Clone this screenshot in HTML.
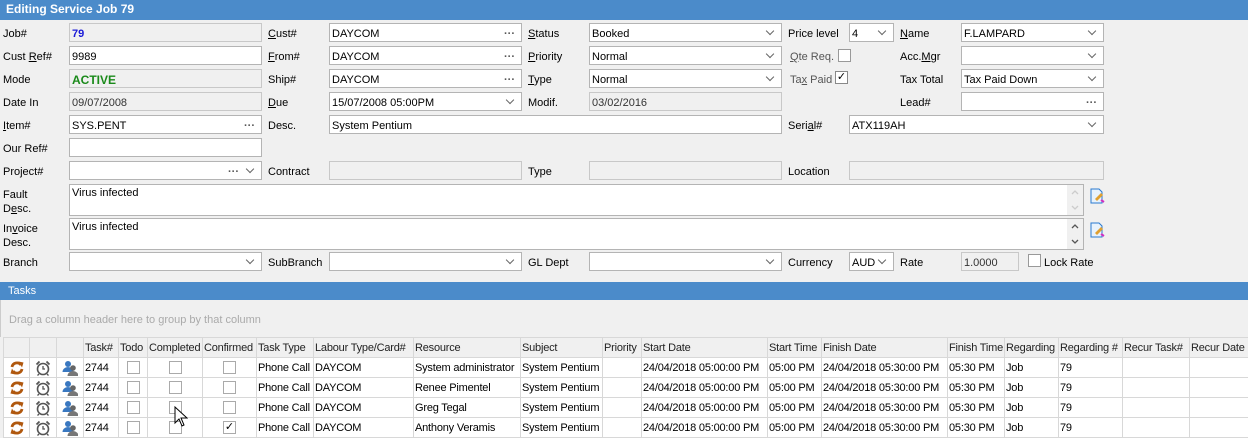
<!DOCTYPE html>
<html><head><meta charset="utf-8"><style>
*{box-sizing:border-box;margin:0;padding:0}
body{width:1248px;height:434px;overflow:hidden;background:#f0f0f0;font-family:"Liberation Sans",sans-serif;font-size:11px;color:#000;position:relative}
.t{position:absolute;left:0;top:0;width:1248px;height:20px;background:#4b8bca;color:#fff;font-weight:bold;font-size:12px;line-height:19px;padding-left:6px}
.l{position:absolute;line-height:14px;white-space:nowrap;margin-top:1px}
.i{position:absolute;height:19px;border:1px solid #b4b4b4;background:#fff;line-height:18px;padding-top:1px;padding-left:2px;white-space:nowrap;overflow:hidden}
.d{background:#f0f0f0;border-color:#c8c8c8;color:#333}
.s::after{content:"";position:absolute;right:8px;top:4px;width:5px;height:5px;border-right:1.3px solid #666;border-bottom:1.3px solid #666;transform:rotate(45deg)}
.e::before{content:"···";position:absolute;right:6px;top:1px;color:#555;font-weight:bold}
.se::before{content:"···";position:absolute;right:22px;top:1px;color:#555;font-weight:bold}
.cb{position:absolute;width:13px;height:13px;border:1px solid #999;background:#fff}
.ta{position:absolute;height:32px;border:1px solid #b4b4b4;background:#fff;padding:2px 2px}
.sc{position:absolute;right:0;top:0;width:16px;height:30px;background:#f0f0f0}
u{text-decoration:underline}
.tb{position:absolute;left:0;top:282px;width:1248px;height:18px;background:#4b8bca;color:#fff;line-height:18px;padding-left:8px}
.dr{position:absolute;left:0;top:300px;width:1248px;height:37px;background:#f0f0f0;color:#aaa;line-height:40px;padding-left:8px;border-left:1px solid #ccc}
table{position:absolute;left:3px;top:337px;width:1245px;border-collapse:collapse;table-layout:fixed;background:#fff;letter-spacing:-0.2px}
td{border:1px solid #d8d8d8;height:20px;padding:0 1px;white-space:nowrap;overflow:hidden;vertical-align:middle}
tr.h td{background:#f0f0f0;color:#222;height:20px}
.c{text-align:center;padding:0}
.c svg{display:block;margin:0 auto}
.gcb{display:inline-block;width:13px;height:13px;border:1px solid #aaa;background:#fff;vertical-align:middle;position:relative;letter-spacing:0}
</style></head><body>
<svg width="0" height="0" style="position:absolute">
<defs>
<g id="rot"><path d="M3 7a5 5 0 0 1 9-2" fill="none" stroke="#b0580e" stroke-width="2.8"/><path d="M9.5 1.5l5 1-1.5 5z" fill="#b0580e"/><path d="M13 9a5 5 0 0 1-9 2" fill="none" stroke="#b0580e" stroke-width="2.8"/><path d="M6.5 14.5l-5-1 1.5-5z" fill="#b0580e"/></g>
<g id="clk"><circle cx="8" cy="9" r="5.5" fill="#fff" stroke="#555" stroke-width="1.6"/><path d="M8 6v3h2" fill="none" stroke="#555" stroke-width="1.3"/><path d="M1.5 4.5l3-3M14.5 4.5l-3-3" stroke="#555" stroke-width="1.8"/><path d="M4 14l-1.5 1.5M12 14l1.5 1.5" stroke="#555" stroke-width="1.3"/></g>
<g id="ppl"><circle cx="6" cy="4" r="3" fill="#3a78c0"/><path d="M0.5 12a5.5 5 0 0 1 11 0z" fill="#3a78c0"/><circle cx="11" cy="8" r="2.8" fill="#666"/><path d="M5.5 16a5.5 5 0 0 1 11 0z" fill="#777"/></g>
</defs></svg>
<div class="t">Editing Service Job 79</div>

<div class="l" style="left:3px;top:26px">Job#</div>
<div class="i d" style="left:69px;top:23px;width:193px;color:#1b1bd8;font-weight:bold">79</div>
<div class="l" style="left:268px;top:26px"><u>C</u>ust#</div>
<div class="i e" style="left:329px;top:23px;width:193px">DAYCOM</div>
<div class="l" style="left:528px;top:26px"><u>S</u>tatus</div>
<div class="i s" style="left:589px;top:23px;width:193px">Booked</div>
<div class="l" style="left:788px;top:26px">Price level</div>
<div class="i s" style="left:849px;top:23px;width:45px">4</div>
<div class="l" style="left:900px;top:26px"><u>N</u>ame</div>
<div class="i s" style="left:961px;top:23px;width:143px">F.LAMPARD</div>

<div class="l" style="left:3px;top:49px">Cust <u>R</u>ef#</div>
<div class="i" style="left:69px;top:46px;width:193px">9989</div>
<div class="l" style="left:268px;top:49px"><u>F</u>rom#</div>
<div class="i e" style="left:329px;top:46px;width:193px">DAYCOM</div>
<div class="l" style="left:528px;top:49px"><u>P</u>riority</div>
<div class="i s" style="left:589px;top:46px;width:193px">Normal</div>
<div class="l" style="left:790px;top:49px;color:#555"><u>Q</u>te Req.</div>
<div class="cb" style="left:838px;top:49px"></div>
<div class="l" style="left:900px;top:49px">Acc.<u>M</u>gr</div>
<div class="i s" style="left:961px;top:46px;width:143px"></div>

<div class="l" style="left:3px;top:72px">Mode</div>
<div class="i d" style="left:69px;top:69px;width:193px;color:#1a8a1a;font-weight:bold;font-size:12px">ACTIVE</div>
<div class="l" style="left:268px;top:72px">Ship#</div>
<div class="i e" style="left:329px;top:69px;width:193px">DAYCOM</div>
<div class="l" style="left:528px;top:72px"><u>T</u>ype</div>
<div class="i s" style="left:589px;top:69px;width:193px">Normal</div>
<div class="l" style="left:790px;top:72px;color:#555">Ta<u>x</u> Paid</div>
<div class="cb" style="left:835px;top:71px;border-color:#888;font-size:11px;line-height:11px;text-align:center">✓</div>
<div class="l" style="left:900px;top:72px">Tax Total</div>
<div class="i s" style="left:961px;top:69px;width:143px">Tax Paid Down</div>

<div class="l" style="left:3px;top:95px">Date In</div>
<div class="i d" style="left:69px;top:92px;width:193px">09/07/2008</div>
<div class="l" style="left:268px;top:95px"><u>D</u>ue</div>
<div class="i s" style="left:329px;top:92px;width:193px">15/07/2008 05:00PM</div>
<div class="l" style="left:528px;top:95px">Modif.</div>
<div class="i d" style="left:589px;top:92px;width:193px">03/02/2016</div>
<div class="l" style="left:900px;top:95px">Lead#</div>
<div class="i e" style="left:961px;top:92px;width:143px"></div>

<div class="l" style="left:3px;top:118px"><u>I</u>tem#</div>
<div class="i e" style="left:69px;top:115px;width:193px">SYS.PENT</div>
<div class="l" style="left:268px;top:118px">Desc.</div>
<div class="i" style="left:329px;top:115px;width:453px">System Pentium</div>
<div class="l" style="left:788px;top:118px">Seri<u>a</u>l#</div>
<div class="i s" style="left:849px;top:115px;width:255px">ATX119AH</div>

<div class="l" style="left:3px;top:141px">Our Ref#</div>
<div class="i" style="left:69px;top:138px;width:193px"></div>

<div class="l" style="left:3px;top:164px">Project#</div>
<div class="i s se" style="left:69px;top:161px;width:193px"></div>
<div class="l" style="left:268px;top:164px">Contract</div>
<div class="i d" style="left:329px;top:161px;width:193px"></div>
<div class="l" style="left:528px;top:164px">Type</div>
<div class="i d" style="left:589px;top:161px;width:193px"></div>
<div class="l" style="left:788px;top:164px">Location</div>
<div class="i d" style="left:849px;top:161px;width:255px"></div>

<div class="l" style="left:3px;top:187px">Fault<br>D<u>e</u>sc.</div>
<div class="ta" style="left:69px;top:184px;width:1015px">Virus infected<div class="sc"><svg width="16" height="30"><path d="M5 9l3-3 3 3M5 21l3 3 3-3" fill="none" stroke="#ccc" stroke-width="1.3"/></svg></div></div>
<div class="l" style="left:3px;top:221px">In<u>v</u>oice<br>Desc.</div>
<div class="ta" style="left:69px;top:218px;width:1015px">Virus infected<div class="sc"><svg width="16" height="30"><path d="M5 9l3-3 3 3M5 21l3 3 3-3" fill="none" stroke="#555" stroke-width="1.3"/></svg></div></div>
<svg style="position:absolute;left:1089px;top:188px" width="16" height="16"><path d="M2 1h8l3 3v11H2z" fill="#e8f2fc" stroke="#2a7ad0"/><path d="M6 11l6-6 2 2-6 6z" fill="#e0a030"/><path d="M12 12l3 2" stroke="#d030c0" stroke-width="2"/></svg>
<svg style="position:absolute;left:1089px;top:222px" width="16" height="16"><path d="M2 1h8l3 3v11H2z" fill="#e8f2fc" stroke="#2a7ad0"/><path d="M6 11l6-6 2 2-6 6z" fill="#e0a030"/><path d="M12 12l3 2" stroke="#d030c0" stroke-width="2"/></svg>

<div class="l" style="left:3px;top:255px">Branch</div>
<div class="i s" style="left:69px;top:252px;width:193px"></div>
<div class="l" style="left:268px;top:255px">SubBranch</div>
<div class="i s" style="left:329px;top:252px;width:193px"></div>
<div class="l" style="left:528px;top:255px">GL Dept</div>
<div class="i s" style="left:589px;top:252px;width:193px"></div>
<div class="l" style="left:788px;top:255px">Currency</div>
<div class="i s" style="left:849px;top:252px;width:45px">AUD</div>
<div class="l" style="left:900px;top:255px">Rate</div>
<div class="i d" style="left:961px;top:252px;width:58px">1.0000</div>
<div class="cb" style="left:1028px;top:254px;border-color:#999"></div>
<div class="l" style="left:1044px;top:255px">Lock Rate</div>

<div class="tb">Tasks</div>
<div class="dr">Drag a column header here to group by that column</div>
<table>
<colgroup><col style="width:26px"><col style="width:27px"><col style="width:27px"><col style="width:35px"><col style="width:29px"><col style="width:55px"><col style="width:54px"><col style="width:57px"><col style="width:100px"><col style="width:107px"><col style="width:82px"><col style="width:39px"><col style="width:126px"><col style="width:54px"><col style="width:126px"><col style="width:57px"><col style="width:54px"><col style="width:64px"><col style="width:67px"><col style="width:59px"></colgroup>
<tr class="h"><td></td><td></td><td></td><td>Task#</td><td>Todo</td><td>Completed</td><td>Confirmed</td><td>Task Type</td><td>Labour Type/Card#</td><td>Resource</td><td>Subject</td><td>Priority</td><td>Start Date</td><td>Start Time</td><td>Finish Date</td><td>Finish Time</td><td>Regarding</td><td>Regarding #</td><td>Recur Task#</td><td>Recur Date</td></tr>
<tr><td class="c"><svg width="16" height="16"><use href="#rot"/></svg></td><td class="c"><svg width="16" height="16"><use href="#clk"/></svg></td><td class="c"><svg width="16" height="16"><use href="#ppl"/></svg></td><td>2744</td><td class="c"><span class="gcb"></span></td><td class="c"><span class="gcb"></span></td><td class="c"><span class="gcb"></span></td><td>Phone Call</td><td>DAYCOM</td><td>System administrator</td><td>System Pentium</td><td></td><td>24/04/2018 05:00:00 PM</td><td>05:00 PM</td><td>24/04/2018 05:30:00 PM</td><td>05:30 PM</td><td>Job</td><td>79</td><td></td><td></td></tr>
<tr><td class="c"><svg width="16" height="16"><use href="#rot"/></svg></td><td class="c"><svg width="16" height="16"><use href="#clk"/></svg></td><td class="c"><svg width="16" height="16"><use href="#ppl"/></svg></td><td>2744</td><td class="c"><span class="gcb"></span></td><td class="c"><span class="gcb"></span></td><td class="c"><span class="gcb"></span></td><td>Phone Call</td><td>DAYCOM</td><td>Renee Pimentel</td><td>System Pentium</td><td></td><td>24/04/2018 05:00:00 PM</td><td>05:00 PM</td><td>24/04/2018 05:30:00 PM</td><td>05:30 PM</td><td>Job</td><td>79</td><td></td><td></td></tr>
<tr><td class="c"><svg width="16" height="16"><use href="#rot"/></svg></td><td class="c"><svg width="16" height="16"><use href="#clk"/></svg></td><td class="c"><svg width="16" height="16"><use href="#ppl"/></svg></td><td>2744</td><td class="c"><span class="gcb"></span></td><td class="c"><span class="gcb"></span></td><td class="c"><span class="gcb"></span></td><td>Phone Call</td><td>DAYCOM</td><td>Greg Tegal</td><td>System Pentium</td><td></td><td>24/04/2018 05:00:00 PM</td><td>05:00 PM</td><td>24/04/2018 05:30:00 PM</td><td>05:30 PM</td><td>Job</td><td>79</td><td></td><td></td></tr>
<tr><td class="c"><svg width="16" height="16"><use href="#rot"/></svg></td><td class="c"><svg width="16" height="16"><use href="#clk"/></svg></td><td class="c"><svg width="16" height="16"><use href="#ppl"/></svg></td><td>2744</td><td class="c"><span class="gcb"></span></td><td class="c"><span class="gcb"></span></td><td class="c"><span class="gcb" style="font-size:11px;line-height:11px">✓</span></td><td>Phone Call</td><td>DAYCOM</td><td>Anthony Veramis</td><td>System Pentium</td><td></td><td>24/04/2018 05:00:00 PM</td><td>05:00 PM</td><td>24/04/2018 05:30:00 PM</td><td>05:30 PM</td><td>Job</td><td>79</td><td></td><td></td></tr>
</table>
<svg style="position:absolute;left:174px;top:406px" width="14" height="22"><path d="M1 1v16l4-4 3 7 2-1-3-7h6z" fill="#fff" stroke="#000"/></svg>
</body></html>
